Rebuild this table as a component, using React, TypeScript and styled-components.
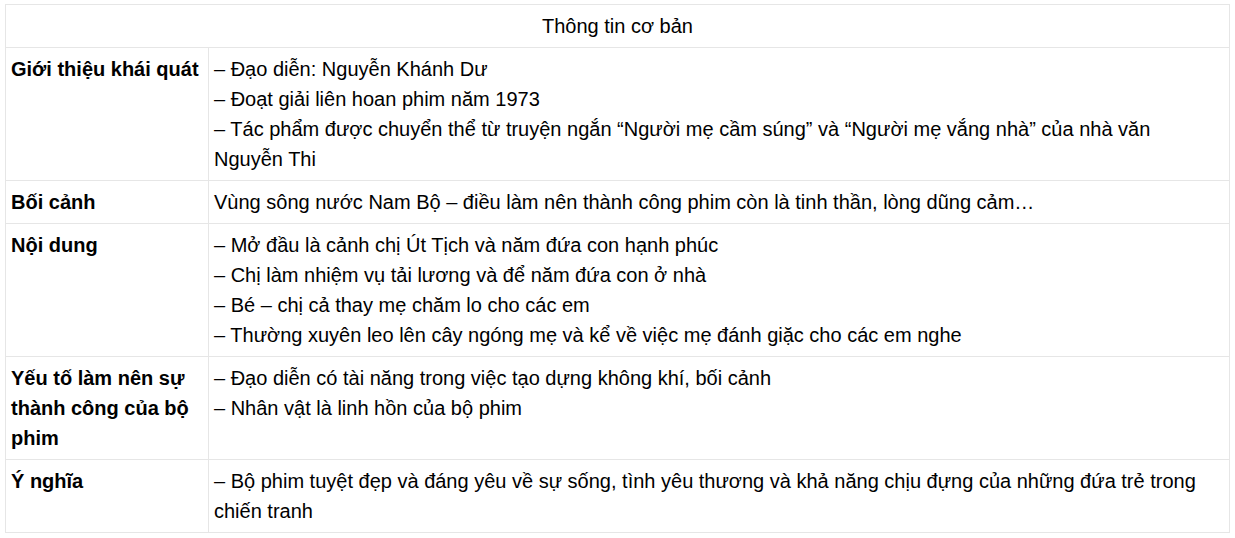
import React from "react";
import styled, { createGlobalStyle } from "styled-components";

const GlobalStyle = createGlobalStyle`
  body {
    margin: 0;
    background: #ffffff;
    font-family: "Liberation Sans", Arial, sans-serif;
    color: #000000;
  }
`;

const Page = styled.div`
  padding: 4px 6px 0 5px;
`;

const Table = styled.table`
  width: 1225px;
  border-collapse: collapse;
  table-layout: fixed;
  font-size: 20px;
  line-height: 30px;
`;

const HeadCell = styled.th`
  border: 1px solid #e6e6e6;
  padding: 6px 5px;
  font-weight: 400;
  text-align: center;
`;

const Cell = styled.td<{ $label?: boolean }>`
  border: 1px solid #e6e6e6;
  padding: 6px 5px;
  vertical-align: top;
  text-align: left;
  font-weight: ${(p) => (p.$label ? 700 : 400)};
`;

const Line = styled.div`
  margin: 0;
`;

const rows: { label: string; lines: string[] }[] = [
  {
    label: "Giới thiệu khái quát",
    lines: [
      "– Đạo diễn: Nguyễn Khánh Dư",
      "– Đoạt giải liên hoan phim năm 1973",
      "– Tác phẩm được chuyển thể từ truyện ngắn “Người mẹ cầm súng” và “Người mẹ vắng nhà” của nhà văn Nguyễn Thi",
    ],
  },
  {
    label: "Bối cảnh",
    lines: [
      "Vùng sông nước Nam Bộ – điều làm nên thành công phim còn là tinh thần, lòng dũng cảm…",
    ],
  },
  {
    label: "Nội dung",
    lines: [
      "– Mở đầu là cảnh chị Út Tịch và năm đứa con hạnh phúc",
      "– Chị làm nhiệm vụ tải lương và để năm đứa con ở nhà",
      "– Bé – chị cả thay mẹ chăm lo cho các em",
      "– Thường xuyên leo lên cây ngóng mẹ và kể về việc mẹ đánh giặc cho các em nghe",
    ],
  },
  {
    label: "Yếu tố làm nên sự thành công của bộ phim",
    lines: [
      "– Đạo diễn có tài năng trong việc tạo dựng không khí, bối cảnh",
      "– Nhân vật là linh hồn của bộ phim",
    ],
  },
  {
    label: "Ý nghĩa",
    lines: [
      "– Bộ phim tuyệt đẹp và đáng yêu về sự sống, tình yêu thương và khả năng chịu đựng của những đứa trẻ trong chiến tranh",
    ],
  },
];

export default function App() {
  return (
    <Page>
      <GlobalStyle />
      <Table>
        <colgroup>
          <col style={{ width: 203 }} />
          <col />
        </colgroup>
        <thead>
          <tr>
            <HeadCell colSpan={2}>Thông tin cơ bản</HeadCell>
          </tr>
        </thead>
        <tbody>
          {rows.map((r) => (
            <tr key={r.label}>
              <Cell $label>{r.label}</Cell>
              <Cell>
                {r.lines.map((l) => (
                  <Line key={l}>{l}</Line>
                ))}
              </Cell>
            </tr>
          ))}
        </tbody>
      </Table>
    </Page>
  );
}
